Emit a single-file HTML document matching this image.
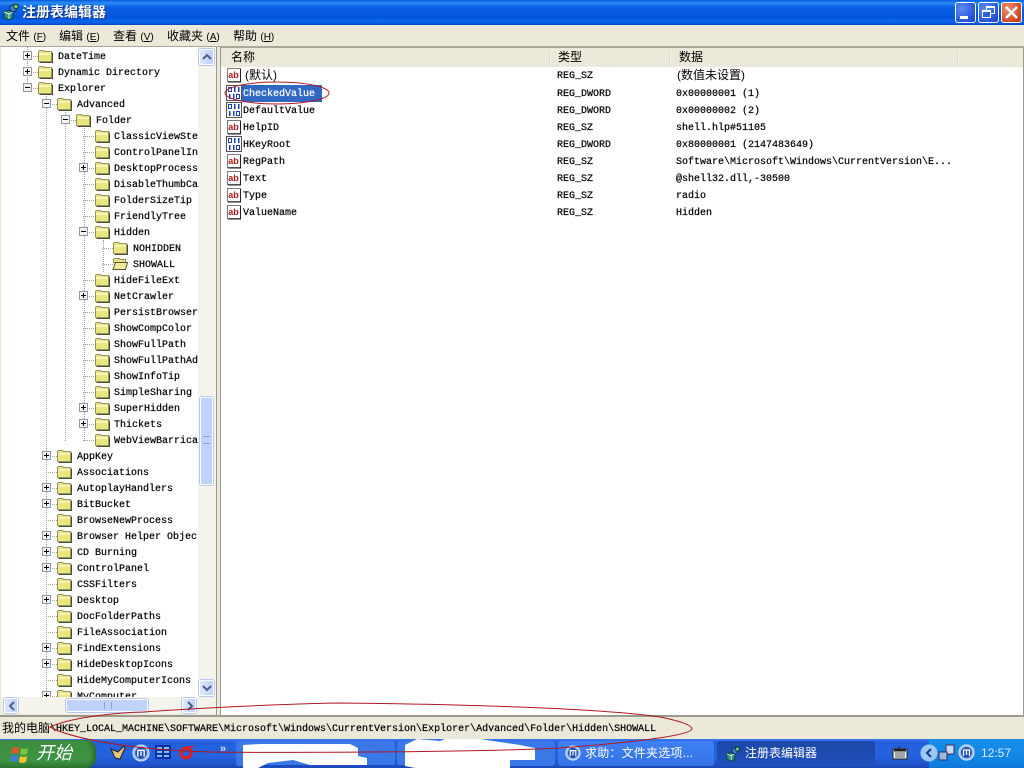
<!DOCTYPE html>
<html><head><meta charset="utf-8"><style>
*{box-sizing:border-box}
html,body{margin:0;padding:0;width:1024px;height:768px;overflow:hidden;background:#ece9d8}
body{position:relative;font:10px/16px "Liberation Mono","Noto Sans CJK SC",monospace;color:#000;-webkit-text-stroke:.2px}
div,span,svg{position:absolute}
.cj{font-family:"Liberation Sans","Noto Sans CJK SC",sans-serif;font-size:12px;white-space:nowrap;margin-top:0!important;-webkit-text-stroke:0}
#title{left:0;top:0;width:1024px;height:25px;background:linear-gradient(#0a5ce0 0,#2b8cf4 3px,#0b62e6 7px,#0455dc 17px,#0a66ee 22px,#0348c0 25px)}
.wb{top:2px;width:21px;height:21px;border:1px solid #fff;border-radius:3px;background:radial-gradient(circle at 30% 30%,#5d8bf0,#1f4ed8 80%)}
#tree{left:1px;top:47px;width:197px;height:650px;background:#fff;overflow:hidden}
.r{left:0;height:16px;white-space:nowrap;line-height:16px}
.r::before{content:"";position:absolute;left:4px;top:8px;width:11px;border-top:1px dotted #a0a0a0}
.r span{left:35px;top:2px}
.r svg.f{left:14px;top:0}
.r svg.x{left:0;top:3px}
.l0{margin-left:22px}.l1{margin-left:41px}.l2{margin-left:60px}.l3{margin-left:78px}.l4{margin-left:97px}
.l3 svg.f{left:15px}
.v{width:0;border-left:1px dotted #a0a0a0}
.sb{background:linear-gradient(90deg,#dde8fe,#bdd0fb);border:1px solid #fff;border-radius:2px;box-shadow:0 0 0 1px #b9c9ee}
.it{left:226px;width:16px;height:16px}
.n{left:243px;white-space:nowrap;margin-top:2px}.ty{left:557px;margin-top:2px}.da{left:676px;white-space:nowrap;margin-top:2px}
.h{top:50px;height:15px;width:2px;background:linear-gradient(90deg,#cbc7b8,#fff)}
.tb{top:741px;height:25px;border-radius:3px}
.tt{color:#fff;font-family:"Liberation Sans","Noto Sans CJK SC",sans-serif;font-size:12px;line-height:16px;white-space:nowrap;-webkit-text-stroke:0}
</style></head><body>
<svg width="0" height="0" style="left:0;top:0"><defs>
<symbol id="fd" viewBox="0 0 16 16"><path d="M1.500 3.500 L2.500 2.500H6.500L7.500 3.500H14.500V13.500H1.500Z" fill="#ebe57f" stroke="#9a9660"/><path d="M2 5h12v2H2z" fill="#f8f4b4"/><path d="M2.500 14.500H15.500V4.500" fill="none" stroke="#4a4a30"/></symbol>
<symbol id="fo" viewBox="0 0 16 16"><path d="M1.500 3.500 L2.500 2.500H7L8 3.500H13.500V6.500H1.500Z" fill="#e9e487" stroke="#8d8a52"/><path d="M1 13.500 L3.500 6.500H15.500L13.500 13.500Z" fill="#f0ec9a" stroke="#55553a"/></symbol>
<symbol id="p" viewBox="0 0 9 9"><rect x=".5" y=".5" width="8" height="8" fill="#f4f2ea" stroke="#8a9bb0"/><path d="M2 4.500H7M4.500 2V7" stroke="#000"/></symbol>
<symbol id="m" viewBox="0 0 9 9"><rect x=".5" y=".5" width="8" height="8" fill="#f4f2ea" stroke="#8a9bb0"/><path d="M2 4.500H7" stroke="#000"/></symbol>
<symbol id="ab" viewBox="0 0 16 16"><path d="M1.500 1.500H14.500V14.500H1.500Z" fill="#fff" stroke="#7a7a7a"/><path d="M14.500 2V15H2" fill="none" stroke="#222"/><text x="2.200" y="11" font-family="Liberation Sans,sans-serif" font-weight="bold" font-size="9" fill="#b01818" stroke="none">ab</text></symbol>
<symbol id="bn" viewBox="0 0 16 16"><path d="M.5 .5H15.500V15.500H.5Z" fill="#fff" stroke="#555"/><path d="M2.500 2.500h3v4h-3zM10.500 9.500h3v4h-3z" fill="none" stroke="#1c3fb0"/><path d="M8 2h1.500v5H8zM12 2h1.500v5H12zM3 9h1.500v5H3zM7 9h1.500v5H7z" fill="#1c3fb0"/></symbol>
<symbol id="rg" viewBox="0 0 18 18"><path d="M2 9l5-2 4 2v6l-4 2-5-2z" fill="#2f8f7a" stroke="#0c3d40"/><path d="M7 10v6M2 9l5 2 4-2" stroke="#c9f0e0" fill="none"/><path d="M8 3l3-1 3 2v4l-3 1-3-2z" fill="#3f7fd0" stroke="#0c2d60"/><path d="M13 1l3 1v3l-2 1-2-1V2z" fill="#7fd07f" stroke="#0c3d20"/></symbol>
<symbol id="mx" viewBox="0 0 20 20"><circle cx="10" cy="10" r="9" fill="#9fc0f0" stroke="#dbe8ff"/><circle cx="10" cy="10" r="6.500" fill="#2050b0"/><path d="M6.500 14V7H13.500V14M10 8V13" stroke="#fff" stroke-width="1.500" fill="none"/></symbol>
<symbol id="ua" viewBox="0 0 16 16"><path d="M4 10l4-4 4 4" stroke="#4d6185" stroke-width="2" fill="none"/></symbol>
</defs></svg>

<div id="title"></div>
<svg style="left:2px;top:3px" width="18" height="18"><use href="#rg"/></svg>
<div class="cj" style="left:22px;top:4px;color:#fff;font-size:14px;font-weight:bold;line-height:17px;text-shadow:1px 1px 1px #0a2a80">注册表编辑器</div>
<div class="wb" style="left:955px"><div style="left:4px;top:13px;width:8px;height:3px;background:#fff"></div></div>
<div class="wb" style="left:978px"><div style="left:7px;top:3px;width:9px;height:8px;border:1px solid #fff;border-top-width:2px"></div><div style="left:3px;top:7px;width:9px;height:8px;border:1px solid #fff;border-top-width:2px;background:#3560dc"></div></div>
<div class="wb" style="left:1001px;background:radial-gradient(circle at 30% 30%,#ef9070,#c8401a 80%)"><svg width="19" height="19" style="left:0;top:0"><path d="M4 4L15 15M15 4L4 15" stroke="#fff" stroke-width="2.400"/></svg></div>

<div class="cj" style="left:6px;top:28px;line-height:16px">文件 <span style="position:static;font-size:10px">(<u>F</u>)</span></div>
<div class="cj" style="left:59px;top:28px;line-height:16px">编辑 <span style="position:static;font-size:10px">(<u>E</u>)</span></div>
<div class="cj" style="left:113px;top:28px;line-height:16px">查看 <span style="position:static;font-size:10px">(<u>V</u>)</span></div>
<div class="cj" style="left:167px;top:28px;line-height:16px">收藏夹 <span style="position:static;font-size:10px">(<u>A</u>)</span></div>
<div class="cj" style="left:233px;top:28px;line-height:16px">帮助 <span style="position:static;font-size:10px">(<u>H</u>)</span></div>
<div style="left:0;top:46px;width:1024px;height:1px;background:#aca899"></div>

<div id="tree">
<div class="v" style="left:26px;top:0;height:41px"></div>
<div class="v" style="left:45px;top:49px;height:601px"></div>
<div class="v" style="left:64px;top:65px;height:329px"></div>
<div class="v" style="left:83px;top:81px;height:313px"></div>
<div class="v" style="left:102px;top:193px;height:32px"></div>
<div class="r l0" style="top:1px"><svg class="x" width="9" height="9"><use href="#p"/></svg><svg class="f" width="16" height="16"><use href="#fd"/></svg><span>DateTime</span></div>
<div class="r l0" style="top:17px"><svg class="x" width="9" height="9"><use href="#p"/></svg><svg class="f" width="16" height="16"><use href="#fd"/></svg><span>Dynamic Directory</span></div>
<div class="r l0" style="top:33px"><svg class="x" width="9" height="9"><use href="#m"/></svg><svg class="f" width="16" height="16"><use href="#fd"/></svg><span>Explorer</span></div>
<div class="r l1" style="top:49px"><svg class="x" width="9" height="9"><use href="#m"/></svg><svg class="f" width="16" height="16"><use href="#fd"/></svg><span>Advanced</span></div>
<div class="r l2" style="top:65px"><svg class="x" width="9" height="9"><use href="#m"/></svg><svg class="f" width="16" height="16"><use href="#fd"/></svg><span>Folder</span></div>
<div class="r l3" style="top:81px"><svg class="f" width="16" height="16"><use href="#fd"/></svg><span>ClassicViewSte</span></div>
<div class="r l3" style="top:97px"><svg class="f" width="16" height="16"><use href="#fd"/></svg><span>ControlPanelIn</span></div>
<div class="r l3" style="top:113px"><svg class="x" width="9" height="9"><use href="#p"/></svg><svg class="f" width="16" height="16"><use href="#fd"/></svg><span>DesktopProcess</span></div>
<div class="r l3" style="top:129px"><svg class="f" width="16" height="16"><use href="#fd"/></svg><span>DisableThumbCa</span></div>
<div class="r l3" style="top:145px"><svg class="f" width="16" height="16"><use href="#fd"/></svg><span>FolderSizeTip</span></div>
<div class="r l3" style="top:161px"><svg class="f" width="16" height="16"><use href="#fd"/></svg><span>FriendlyTree</span></div>
<div class="r l3" style="top:177px"><svg class="x" width="9" height="9"><use href="#m"/></svg><svg class="f" width="16" height="16"><use href="#fd"/></svg><span>Hidden</span></div>
<div class="r l4" style="top:193px"><svg class="f" width="16" height="16"><use href="#fd"/></svg><span>NOHIDDEN</span></div>
<div class="r l4" style="top:209px"><svg class="f" width="16" height="16"><use href="#fo"/></svg><span>SHOWALL</span></div>
<div class="r l3" style="top:225px"><svg class="f" width="16" height="16"><use href="#fd"/></svg><span>HideFileExt</span></div>
<div class="r l3" style="top:241px"><svg class="x" width="9" height="9"><use href="#p"/></svg><svg class="f" width="16" height="16"><use href="#fd"/></svg><span>NetCrawler</span></div>
<div class="r l3" style="top:257px"><svg class="f" width="16" height="16"><use href="#fd"/></svg><span>PersistBrowser</span></div>
<div class="r l3" style="top:273px"><svg class="f" width="16" height="16"><use href="#fd"/></svg><span>ShowCompColor</span></div>
<div class="r l3" style="top:289px"><svg class="f" width="16" height="16"><use href="#fd"/></svg><span>ShowFullPath</span></div>
<div class="r l3" style="top:305px"><svg class="f" width="16" height="16"><use href="#fd"/></svg><span>ShowFullPathAd</span></div>
<div class="r l3" style="top:321px"><svg class="f" width="16" height="16"><use href="#fd"/></svg><span>ShowInfoTip</span></div>
<div class="r l3" style="top:337px"><svg class="f" width="16" height="16"><use href="#fd"/></svg><span>SimpleSharing</span></div>
<div class="r l3" style="top:353px"><svg class="x" width="9" height="9"><use href="#p"/></svg><svg class="f" width="16" height="16"><use href="#fd"/></svg><span>SuperHidden</span></div>
<div class="r l3" style="top:369px"><svg class="x" width="9" height="9"><use href="#p"/></svg><svg class="f" width="16" height="16"><use href="#fd"/></svg><span>Thickets</span></div>
<div class="r l3" style="top:385px"><svg class="f" width="16" height="16"><use href="#fd"/></svg><span>WebViewBarrica</span></div>
<div class="r l1" style="top:401px"><svg class="x" width="9" height="9"><use href="#p"/></svg><svg class="f" width="16" height="16"><use href="#fd"/></svg><span>AppKey</span></div>
<div class="r l1" style="top:417px"><svg class="f" width="16" height="16"><use href="#fd"/></svg><span>Associations</span></div>
<div class="r l1" style="top:433px"><svg class="x" width="9" height="9"><use href="#p"/></svg><svg class="f" width="16" height="16"><use href="#fd"/></svg><span>AutoplayHandlers</span></div>
<div class="r l1" style="top:449px"><svg class="x" width="9" height="9"><use href="#p"/></svg><svg class="f" width="16" height="16"><use href="#fd"/></svg><span>BitBucket</span></div>
<div class="r l1" style="top:465px"><svg class="f" width="16" height="16"><use href="#fd"/></svg><span>BrowseNewProcess</span></div>
<div class="r l1" style="top:481px"><svg class="x" width="9" height="9"><use href="#p"/></svg><svg class="f" width="16" height="16"><use href="#fd"/></svg><span>Browser Helper Objects</span></div>
<div class="r l1" style="top:497px"><svg class="x" width="9" height="9"><use href="#p"/></svg><svg class="f" width="16" height="16"><use href="#fd"/></svg><span>CD Burning</span></div>
<div class="r l1" style="top:513px"><svg class="x" width="9" height="9"><use href="#p"/></svg><svg class="f" width="16" height="16"><use href="#fd"/></svg><span>ControlPanel</span></div>
<div class="r l1" style="top:529px"><svg class="f" width="16" height="16"><use href="#fd"/></svg><span>CSSFilters</span></div>
<div class="r l1" style="top:545px"><svg class="x" width="9" height="9"><use href="#p"/></svg><svg class="f" width="16" height="16"><use href="#fd"/></svg><span>Desktop</span></div>
<div class="r l1" style="top:561px"><svg class="f" width="16" height="16"><use href="#fd"/></svg><span>DocFolderPaths</span></div>
<div class="r l1" style="top:577px"><svg class="f" width="16" height="16"><use href="#fd"/></svg><span>FileAssociation</span></div>
<div class="r l1" style="top:593px"><svg class="x" width="9" height="9"><use href="#p"/></svg><svg class="f" width="16" height="16"><use href="#fd"/></svg><span>FindExtensions</span></div>
<div class="r l1" style="top:609px"><svg class="x" width="9" height="9"><use href="#p"/></svg><svg class="f" width="16" height="16"><use href="#fd"/></svg><span>HideDesktopIcons</span></div>
<div class="r l1" style="top:625px"><svg class="f" width="16" height="16"><use href="#fd"/></svg><span>HideMyComputerIcons</span></div>
<div class="r l1" style="top:641px"><svg class="x" width="9" height="9"><use href="#p"/></svg><svg class="f" width="16" height="16"><use href="#fd"/></svg><span>MyComputer</span></div>
</div>

<div style="left:198px;top:47px;width:18px;height:650px;background:#f5f4ec"></div>
<div class="sb" style="left:199px;top:49px;width:15px;height:16px"><svg width="16" height="16" style="left:-1px;top:-1px"><use href="#ua"/></svg></div>
<div class="sb" style="left:199px;top:680px;width:15px;height:16px"><svg width="16" height="16" style="left:-1px;top:-1px;transform:rotate(180deg)"><use href="#ua"/></svg></div>
<div class="sb" style="left:200px;top:397px;width:13px;height:88px;background:#bfd2fb"><div style="left:2px;top:38px;width:7px;height:8px;border-top:1px solid #8aa0d0;border-bottom:1px solid #8aa0d0"></div></div>
<div style="left:1px;top:697px;width:215px;height:17px;background:#f5f4ec"></div>
<div class="sb" style="left:4px;top:698px;width:14px;height:15px"><svg width="16" height="16" style="left:-1px;top:-1px;transform:rotate(-90deg)"><use href="#ua"/></svg></div>
<div class="sb" style="left:182px;top:698px;width:14px;height:15px"><svg width="16" height="16" style="left:-1px;top:-1px;transform:rotate(90deg)"><use href="#ua"/></svg></div>
<div class="sb" style="left:66px;top:699px;width:82px;height:13px;background:#bfd2fb"><div style="left:37px;top:2px;width:8px;height:7px;border-left:1px solid #8aa0d0;border-right:1px solid #8aa0d0"></div></div>
<div style="left:216px;top:47px;width:1px;height:668px;background:#9a9a90"></div>
<div style="left:220px;top:47px;width:1px;height:668px;background:#9a9a90"></div>

<div style="left:221px;top:47px;width:802px;height:668px;background:#fff"></div>
<div style="left:221px;top:47px;width:802px;height:20px;background:#ece9d8;border-top:1px solid #aca899"></div>
<div style="left:1023px;top:47px;width:1px;height:668px;background:#9a9a90"></div>
<div class="h" style="left:549px"></div><div class="h" style="left:669px"></div><div class="h" style="left:957px"></div>
<div class="cj" style="left:231px;top:49px;line-height:16px">名称</div>
<div class="cj" style="left:558px;top:49px;line-height:16px">类型</div>
<div class="cj" style="left:679px;top:49px;line-height:16px">数据</div>

<div style="left:242px;top:85px;width:80px;height:17px;background:#3168c4"></div>

<svg class="it" style="top:67px"><use href="#ab"/></svg><div class="n cj" style="top:67px;left:245px">(默认)</div><div class="ty" style="top:67px">REG_SZ</div><div class="da cj" style="top:67px;left:677px">(数值未设置)</div>
<svg class="it" style="top:85px"><use href="#bn"/></svg><div class="n" style="top:85px;color:#fff">CheckedValue</div><div class="ty" style="top:85px">REG_DWORD</div><div class="da" style="top:85px">0x00000001 (1)</div>
<svg class="it" style="top:102px"><use href="#bn"/></svg><div class="n" style="top:102px">DefaultValue</div><div class="ty" style="top:102px">REG_DWORD</div><div class="da" style="top:102px">0x00000002 (2)</div>
<svg class="it" style="top:119px"><use href="#ab"/></svg><div class="n" style="top:119px">HelpID</div><div class="ty" style="top:119px">REG_SZ</div><div class="da" style="top:119px">shell.hlp#51105</div>
<svg class="it" style="top:136px"><use href="#bn"/></svg><div class="n" style="top:136px">HKeyRoot</div><div class="ty" style="top:136px">REG_DWORD</div><div class="da" style="top:136px">0x80000001 (2147483649)</div>
<svg class="it" style="top:153px"><use href="#ab"/></svg><div class="n" style="top:153px">RegPath</div><div class="ty" style="top:153px">REG_SZ</div><div class="da" style="top:153px">Software\Microsoft\Windows\CurrentVersion\E...</div>
<svg class="it" style="top:170px"><use href="#ab"/></svg><div class="n" style="top:170px">Text</div><div class="ty" style="top:170px">REG_SZ</div><div class="da" style="top:170px">@shell32.dll,-30500</div>
<svg class="it" style="top:187px"><use href="#ab"/></svg><div class="n" style="top:187px">Type</div><div class="ty" style="top:187px">REG_SZ</div><div class="da" style="top:187px">radio</div>
<svg class="it" style="top:204px"><use href="#ab"/></svg><div class="n" style="top:204px">ValueName</div><div class="ty" style="top:204px">REG_SZ</div><div class="da" style="top:204px">Hidden</div>

<div style="left:0;top:715px;width:1024px;height:2px;background:#9a9a90"></div>
<div class="cj" style="left:2px;top:720px;line-height:16px">我的电脑</div>
<div style="left:50px;top:722px;white-space:nowrap">\HKEY_LOCAL_MACHINE\SOFTWARE\Microsoft\Windows\CurrentVersion\Explorer\Advanced\Folder\Hidden\SHOWALL</div>

<div style="left:0;top:739px;width:1024px;height:29px;background:linear-gradient(#3a7cf0 0,#2460dc 3px,#2562de 60%,#2050c8 90%,#1a44b0 100%)"></div>
<div style="left:0;top:740px;width:96px;height:28px;background:linear-gradient(#4c9a50,#3c8f3f 20%,#3f9444 70%,#2e7a30);border-radius:0 10px 10px 0;box-shadow:inset -3px 0 4px #2a6a2a"></div>
<svg style="left:10px;top:744px" width="20" height="20"><path d="M2 4Q6 2 9 4L8 10Q5 8 1 10Z" fill="#e4572e"/><path d="M11 4Q14 6 18 4L17 10Q13 12 10 10Z" fill="#7cc142"/><path d="M1 12Q5 10 8 12L7 18Q4 16 0 18Z" fill="#3f7ee0"/><path d="M10 12Q13 14 17 12L16 18Q12 20 9 18Z" fill="#f6c22d"/></svg>
<div class="tt" style="left:36px;top:743px;font-size:18px;line-height:20px;font-style:italic">开始</div>
<svg style="left:109px;top:744px" width="18" height="18"><path d="M2 5l7 3 6-6 1 2-5 11-5-1z" fill="#e3c67a" stroke="#222"/></svg>
<svg style="left:132px;top:744px" width="18" height="18" viewBox="0 0 20 20"><use href="#mx"/></svg>
<svg style="left:155px;top:744px" width="16" height="16"><path d="M0 1H16V15H0Z" fill="#0a2fa8"/><path d="M2 3h5v2H2zM2 7h5v2H2zM2 11h5v2H2zM9 3h5v2H9zM9 7h5v2H9zM9 11h5v2H9z" fill="#7fc0ff"/></svg>
<svg style="left:178px;top:745px" width="16" height="16"><circle cx="8" cy="8" r="5" fill="none" stroke="#e0201c" stroke-width="3"/><path d="M8 4L15 1" stroke="#e0201c" stroke-width="2"/></svg>
<div class="tt" style="left:220px;top:741px;font-family:'Liberation Sans';font-size:11px;color:#cfe0ff;font-weight:bold">»</div>
<div class="tb" style="left:236px;width:159px;background:#3a78e8"></div>
<div class="tb" style="left:397px;width:158px;background:#3a78e8"></div>
<div class="tb" style="left:558px;width:156px;background:linear-gradient(#3e80f2,#3573e6)"></div>
<div class="tb" style="left:717px;width:158px;background:linear-gradient(#1b48a8,#2050bc)"></div>
<svg style="left:565px;top:745px" width="16" height="16" viewBox="0 0 20 20"><use href="#mx"/></svg>
<div class="tt" style="left:585px;top:745px;letter-spacing:.2px">求助：文件夹选项...</div>
<svg style="left:725px;top:745px" width="16" height="18"><use href="#rg"/></svg>
<div class="tt" style="left:745px;top:745px">注册表编辑器</div>
<div style="left:929px;top:739px;width:95px;height:29px;background:linear-gradient(#1890ea,#1088e4 60%,#0e78d8)"></div>
<svg style="left:892px;top:745px" width="16" height="15"><path d="M1 4H15V14H1Z" fill="#f2f2f2" stroke="#222"/><path d="M2 5.500h12" stroke="#222" stroke-width="2"/><path d="M3 8h10M3 10h10M3 12h10" stroke="#555"/><path d="M7 4V1" stroke="#222"/></svg>
<svg style="left:920px;top:744px" width="18" height="18"><circle cx="9" cy="9" r="8.500" fill="#9cc8f4"/><path d="M11 5L7 9l4 4" stroke="#10408c" stroke-width="2" fill="none"/></svg>
<svg style="left:938px;top:744px" width="17" height="18"><path d="M8 1h8v9H8z" fill="#c9d8f8" stroke="#335"/><path d="M1 8h8v8H1z" fill="#9cb8e8" stroke="#335"/></svg>
<svg style="left:958px;top:744px" width="17" height="17" viewBox="0 0 20 20"><use href="#mx"/></svg>
<div class="tt" style="left:981px;top:745px;font-size:12px;font-family:'Liberation Sans';color:#d8ecff">12:57</div>

<svg style="left:0;top:0" width="1024" height="768">
<path d="M258 765H405V768H258Z" fill="#1c4cc0"/>
<path d="M243 745L260 744H350L358 748V756L367 758V765H310L293 760L268 763L258 768H243Z" fill="#fff"/>
<path d="M405 745L417 739L440 741L445 739H480L520 745L535 748V760H510V768H415L405 766Z" fill="#fff"/>
<ellipse cx="277" cy="93" rx="52" ry="11" fill="none" stroke="#b01820" stroke-width="1"/>
<path d="M50 727C70 718 110 713 143 712C200 708 280 704 340 703C450 704 600 708 660 717C680 721 692 725 692 729C690 735 640 742 560 748C480 752 300 753 210 752C130 750 70 738 50 727Z" fill="none" stroke="#b01820" stroke-width="1"/>
</svg>
</body></html>
